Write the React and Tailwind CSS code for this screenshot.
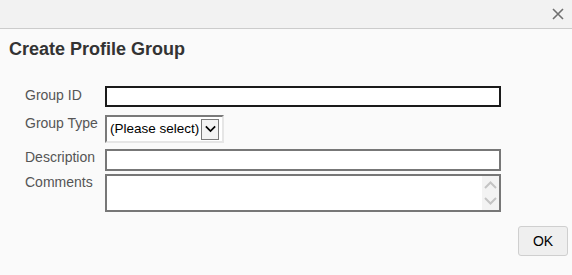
import React from "react";

const font = { fontFamily: '"Liberation Sans", Arial, sans-serif' };

function Chevron({ up, className }) {
  return (
    <svg width="13" height="8" viewBox="0 0 13 8" className={className}>
      <path
        d={up ? "M1 7 L6.5 1.5 L12 7" : "M1 1 L6.5 6.5 L12 1"}
        fill="none"
        stroke="currentColor"
        strokeWidth="2"
      />
    </svg>
  );
}

function Label({ children, className = "" }) {
  return (
    <div className={`w-[80px] shrink-0 pl-[25px] box-content text-[14px] leading-[16px] text-[#555] whitespace-nowrap ${className}`}>
      {children}
    </div>
  );
}

export default function App() {
  return (
    <div className="w-[572px] h-[275px] bg-[#fafafa] flex flex-col overflow-hidden" style={font}>
      {/* header bar */}
      <div className="h-[29px] shrink-0 bg-[#f2f2f2] border-b border-[#cccccc] flex items-center justify-end pr-[8px]">
        <svg width="12" height="12" viewBox="0 0 12 12" className="text-[#707070]">
          <path d="M1 1 L11 11 M11 1 L1 11" stroke="currentColor" strokeWidth="1.6" />
        </svg>
      </div>

      <h2 className="mt-[10px] pl-[9px] text-[18px] leading-[21px] font-bold text-[#333]">Create Profile Group</h2>

      <div className="mt-[26px] flex flex-col">
        <div className="flex items-start">
          <Label className="mt-[1px]">Group ID</Label>
          <div className="w-[396px] h-[21px] border-2 border-[#1a1a1a] bg-white" />
        </div>

        <div className="flex items-start mt-[8px]">
          <Label>Group Type</Label>
          <div className="w-[119px] h-[28px] bg-white border-2 border-t-[#7a7a7a] border-l-[#7a7a7a] border-r-[#e6e6e6] border-b-[#e6e6e6] flex items-center pl-[3px] pr-[3px] gap-[2px]">
            <span className="text-[13.5px] text-black leading-none whitespace-nowrap">(Please select)</span>
            <div className="w-[19px] h-[21px] border border-[#7a7a7a] bg-[#f4f4f4] flex items-center justify-center">
              <Chevron className="text-black w-[11px]" />
            </div>
          </div>
        </div>

        <div className="flex items-start mt-[6px]">
          <Label>Description</Label>
          <div className="w-[396px] h-[22px] border-2 border-[#777] bg-white" />
        </div>

        <div className="flex items-start mt-[3px]">
          <Label>Comments</Label>
          <div className="w-[396px] h-[38px] border-2 border-[#777] bg-white flex">
            <div className="flex-1" />
            <div className="w-[17px] bg-[#f3f3f3] flex flex-col items-center justify-between py-[5px] text-[#c4c4c4]">
              <Chevron up />
              <Chevron />
            </div>
          </div>
        </div>
      </div>

      <div className="flex justify-end mt-[14px] pr-[4px]">
        <button className="w-[50px] h-[30px] bg-[#efefef] border border-[#cfcfcf] rounded-[3px] text-[14px] text-black">
          OK
        </button>
      </div>
    </div>
  );
}
